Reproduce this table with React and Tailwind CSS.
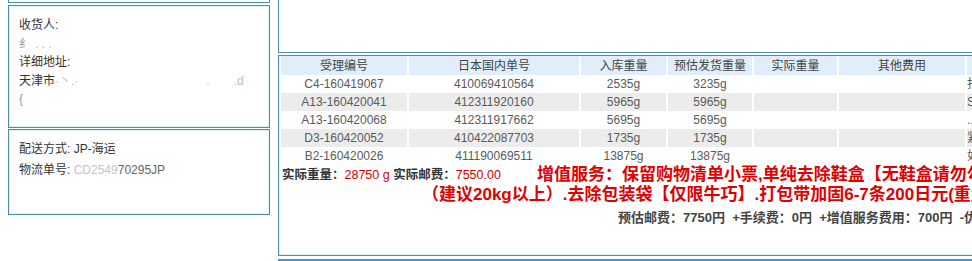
import React from 'react';

const rows = [
    { id: 'C4-160419067', jp: '410069410564', inW: '2535g', estW: '3235g', note: '打包加固' },
    { id: 'A13-160420041', jp: '412311920160', inW: '5965g', estW: '5965g', note: 'SHOES' },
    { id: 'A13-160420068', jp: '412311917662', inW: '5695g', estW: '5695g', note: '...' },
    { id: 'D3-160420052', jp: '410422087703', inW: '1735g', estW: '1735g', note: '紧急' },
    { id: 'B2-160420026', jp: '411190069511', inW: '13875g', estW: '13875g', note: '如有问题' },
];

const box = 'border border-[#4d8cab] shadow-[inset_0_0_0_1px_#dcf3f8]';

function App() {
    return (
        <div className="w-[972px] h-[261px] overflow-hidden bg-white flex font-['Liberation_Sans','Noto_Sans_CJK_SC',sans-serif]">
            {/* left column: address + shipping */}
            <div className="ml-[8px] w-[262px] shrink-0 flex flex-col">
                <div className="shrink-0 h-[3px] border-x border-b border-[#4d8cab]" />
                <div className={`shrink-0 mt-[2px] h-[123px] ${box} pt-[10px] pl-[10px] text-[12px] leading-[18.5px] text-[#333]`}>
                    <div>收货人:</div>
                    <div>
                        <span className="text-[#999]">纟</span>
                        <span className="ml-1 text-[#bbb]">. . .</span>
                    </div>
                    <div>详细地址:</div>
                    <div className="whitespace-nowrap">
                        天津市<span className="text-[#bbb]">·丶.·</span>
                        <span className="ml-[128px] text-[#ccc]">.</span>
                        <span className="ml-[24px] text-[#bbb]">.d</span>
                    </div>
                    <div className="text-[#999]">{'{'}</div>
                </div>
                <div className={`shrink-0 mt-[1px] h-[86px] ${box} pt-[9px] pl-[10px] text-[12px] leading-[21px] text-[#333]`}>
                    <div>配送方式: JP-海运</div>
                    <div>
                        物流单号: <span className="text-[#c4c4c4]">CD2549</span>
                        <span className="text-[#666]">70295JP</span>
                    </div>
                </div>
            </div>

            {/* right column: parcel table */}
            <div className="ml-[8px] w-[780px] shrink-0 flex flex-col">
                <div className="shrink-0 h-[53px] border-x border-b border-[#4d8cab]" />
                <div className={`shrink-0 mt-[2px] h-[201px] ${box}`}>
                    <table className="table-fixed w-[840px] border-separate border-spacing-x-[2px] border-spacing-y-0 text-[12px] text-[#5a5a5a]">
                        <colgroup>
                            <col className="w-[126px]" />
                            <col className="w-[170px]" />
                            <col className="w-[85px]" />
                            <col className="w-[84px]" />
                            <col className="w-[83px]" />
                            <col className="w-[126px]" />
                            <col className="w-[150px]" />
                        </colgroup>
                        <thead>
                            <tr className="h-[19px] bg-[#dfeefa] text-[#444]">
                                <th className="p-0 font-normal">受理编号</th>
                                <th className="p-0 font-normal">日本国内单号</th>
                                <th className="p-0 font-normal">入库重量</th>
                                <th className="p-0 font-normal">预估发货重量</th>
                                <th className="p-0 font-normal">实际重量</th>
                                <th className="p-0 font-normal">其他费用</th>
                                <th className="p-0 font-normal"></th>
                            </tr>
                        </thead>
                        <tbody>
                            {rows.map((r, i) => (
                                <tr key={r.id} className={`h-[18px] ${i % 2 === 1 ? 'bg-[#ececec]' : 'bg-white'}`}>
                                    <td className="p-0 text-center">{r.id}</td>
                                    <td className="p-0 text-center">{r.jp}</td>
                                    <td className="p-0 text-center">{r.inW}</td>
                                    <td className="p-0 text-center">{r.estW}</td>
                                    <td className="p-0"></td>
                                    <td className="p-0"></td>
                                    <td className="p-0 text-left whitespace-nowrap">{r.note}</td>
                                </tr>
                            ))}
                        </tbody>
                    </table>

                    {/* totals and value-added services */}
                    <div className="flex items-center h-[20px] whitespace-nowrap">
                        <div className="w-[258px] shrink-0 pl-[3px] text-[12.5px] font-bold text-[#333]">
                            实际重量：<span className="font-normal text-[#d40000]">28750 g</span> 实际邮费：
                            <span className="font-normal text-[#d40000]">7550.00</span>
                        </div>
                        <div className="text-[17px] leading-[20px] font-bold text-[#e00000]">
                            增值服务：保留购物清单小票,单纯去除鞋盒【无鞋盒请勿勾选】
                        </div>
                    </div>
                    <div className="h-[20px] pl-[143px] whitespace-nowrap text-[17px] leading-[20px] font-bold text-[#e00000]">
                        （建议20kg以上）.去除包装袋【仅限牛巧】.打包带加固6-7条200日元(重量超过)
                    </div>
                    <div className="mt-[3px] h-[20px] pl-[339px] whitespace-nowrap text-[13px] leading-[20px] font-bold text-[#444]">
                        预估邮费：7750円{'\u00a0\u00a0'}+手续费：0円{'\u00a0\u00a0'}+增值服务费用：700円{'\u00a0\u00a0'}-优惠：0円
                    </div>
                </div>
                <div className="shrink-0 mt-[3px] h-[20px] border-t-2 border-x border-[#3b9ad8]" />
            </div>
        </div>
    );
}

export default App;
